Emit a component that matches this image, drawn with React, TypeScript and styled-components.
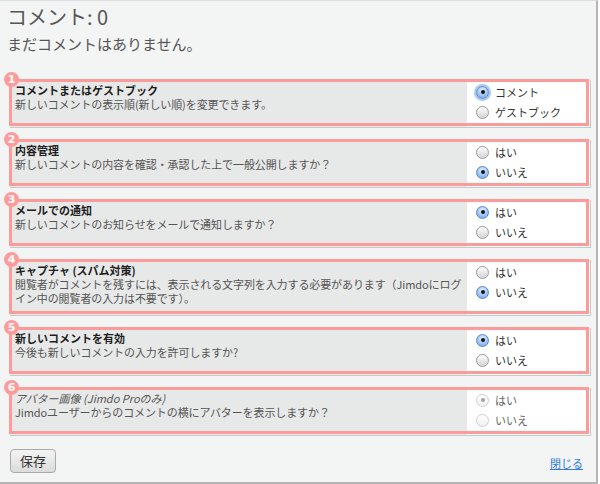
import React from "react";
import styled, { createGlobalStyle, css } from "styled-components";

const Global = createGlobalStyle`
  html, body { margin: 0; padding: 0; background: #ffffff; }
  body { font-family: "Noto Sans CJK JP", "Noto Sans", sans-serif; }
  * { box-sizing: border-box; }
`;

const Page = styled.div`
  width: 598px;
  height: 484px;
  background: #f3f4f4;
  border-top: 1px solid #dde0e1;
  border-right: 2px solid #b6b6b6;
  border-bottom: 2px solid #b6b6b6;
  padding: 3px 13px 0 7px;
  display: flex;
  flex-direction: column;
`;

const Heading = styled.h1`
  margin: 0;
  font-size: 20px;
  line-height: 26px;
  font-weight: normal;
  color: #555;
`;

const SubHeading = styled.p`
  margin: 4px 0 0;
  font-size: 15px;
  line-height: 20px;
  color: #555;
`;

const Rows = styled.div`
  margin: 26px 0 0 3px;
  width: 581px;
  display: flex;
  flex-direction: column;
  gap: 12px;
`;

const Row = styled.div`
  position: relative;
  display: grid;
  grid-template-columns: 457px 1fr;
  border-right: 1px solid #c9c9c9;
  border-bottom: 1px solid #c9c9c9;
`;

const Info = styled.div`
  background: #e7e8e8;
  padding: 3px 4px 10px 5px;
  font-size: 11px;
  line-height: 14px;
  color: #555;
  white-space: nowrap;
  overflow: hidden;
`;

const Title = styled.div<{ $muted?: boolean }>`
  font-weight: bold;
  color: #1e1e1e;
  ${(p) =>
    p.$muted &&
    css`
      font-weight: normal;
      font-style: italic;
      color: #555;
    `}
`;

const Desc = styled.div`
  letter-spacing: -0.1px;
`;

const Options = styled.div`
  background: #ffffff;
  padding: 2px 0 5px 9px;
  display: flex;
  flex-direction: column;
`;

const Option = styled.div<{ $disabled?: boolean }>`
  height: 20px;
  display: flex;
  align-items: center;
  gap: 6px;
  font-size: 11px;
  color: ${(p) => (p.$disabled ? "#666" : "#333")};
`;

const RadioDot = styled.span<{ $checked?: boolean; $focus?: boolean; $disabled?: boolean }>`
  position: relative;
  width: 13px;
  height: 13px;
  flex: none;
  border-radius: 50%;
  border: 1px solid #9c9c9c;
  background: linear-gradient(#ffffff, #e4e4e4 60%, #d4d4d4);
  ${(p) =>
    p.$checked &&
    css`
      border-color: #5a88c8;
      background: radial-gradient(circle at 50% 30%, #e6f1ff, #9cc4f2 55%, #6aa0e6);
      &::after {
        content: "";
        position: absolute;
        left: 50%;
        top: 50%;
        width: 4px;
        height: 4px;
        margin: -2px 0 0 -2px;
        border-radius: 50%;
        background: #111;
      }
    `}
  ${(p) =>
    p.$focus &&
    css`
      box-shadow: 0 0 1px 2px rgba(92, 150, 230, 0.55);
    `}
  ${(p) =>
    p.$disabled &&
    css`
      border-color: #cfcfcf;
      background: linear-gradient(#ffffff, #f1f1f1);
      &::after {
        background: #a0a0a0;
      }
    `}
`;

const Highlight = styled.span`
  position: absolute;
  top: -1px;
  left: -1px;
  right: 1px;
  bottom: 1px;
  border: 3px solid #fd9b9b;
  pointer-events: none;
`;

const Badge = styled.span`
  position: absolute;
  top: -8px;
  left: -6px;
  width: 15px;
  height: 15px;
  border-radius: 50%;
  background: #fd9b9b;
  color: #ffffff;
  font-family: "DejaVu Sans", "Liberation Sans", sans-serif;
  font-weight: bold;
  font-size: 11px;
  line-height: 15px;
  text-align: center;
`;

const Footer = styled.div`
  margin: 13px 0 0 3px;
  display: flex;
  justify-content: space-between;
  align-items: center;
`;

const SaveButton = styled.button`
  width: 46px;
  height: 24px;
  padding: 0;
  border: 1px solid #a9a9a9;
  border-radius: 4px;
  background: linear-gradient(#f4f4f4, #dcdcdc);
  font-family: "Noto Sans CJK JP", sans-serif;
  font-size: 13px;
  line-height: 22px;
  color: #333;
`;

const CloseLink = styled.a`
  margin-top: 4px;
  font-size: 11px;
  line-height: 14px;
  color: #2d7be0;
  text-decoration: underline;
`;

type Setting = {
  title: string;
  desc: string[];
  options: string[];
  checked: number;
  focus?: boolean;
  disabled?: boolean;
};

const settings: Setting[] = [
  {
    title: "コメントまたはゲストブック",
    desc: ["新しいコメントの表示順(新しい順)を変更できます。"],
    options: ["コメント", "ゲストブック"],
    checked: 0,
    focus: true,
  },
  {
    title: "内容管理",
    desc: ["新しいコメントの内容を確認・承認した上で一般公開しますか？"],
    options: ["はい", "いいえ"],
    checked: 1,
  },
  {
    title: "メールでの通知",
    desc: ["新しいコメントのお知らせをメールで通知しますか？"],
    options: ["はい", "いいえ"],
    checked: 0,
  },
  {
    title: "キャプチャ (スパム対策)",
    desc: [
      "閲覧者がコメントを残すには、表示される文字列を入力する必要があります（Jimdoにログ",
      "イン中の閲覧者の入力は不要です）。",
    ],
    options: ["はい", "いいえ"],
    checked: 1,
  },
  {
    title: "新しいコメントを有効",
    desc: ["今後も新しいコメントの入力を許可しますか?"],
    options: ["はい", "いいえ"],
    checked: 0,
  },
  {
    title: "アバター画像 (Jimdo Proのみ)",
    desc: ["Jimdoユーザーからのコメントの横にアバターを表示しますか？"],
    options: ["はい", "いいえ"],
    checked: 0,
    disabled: true,
  },
];

export default function App() {
  return (
    <>
      <Global />
      <Page>
        <Heading>コメント: 0</Heading>
        <SubHeading>まだコメントはありません。</SubHeading>
        <Rows>
          {settings.map((s, i) => (
            <Row key={i}>
              <Info>
                <Title $muted={s.disabled}>{s.title}</Title>
                {s.desc.map((d, j) => (
                  <Desc key={j}>{d}</Desc>
                ))}
              </Info>
              <Options>
                {s.options.map((o, j) => (
                  <Option key={j} $disabled={s.disabled}>
                    <RadioDot
                      role="radio"
                      aria-checked={j === s.checked}
                      $checked={j === s.checked}
                      $focus={s.focus && j === s.checked}
                      $disabled={s.disabled}
                    />
                    {o}
                  </Option>
                ))}
              </Options>
              <Highlight />
              <Badge>{i + 1}</Badge>
            </Row>
          ))}
        </Rows>
        <Footer>
          <SaveButton>保存</SaveButton>
          <CloseLink href="#">閉じる</CloseLink>
        </Footer>
      </Page>
    </>
  );
}
